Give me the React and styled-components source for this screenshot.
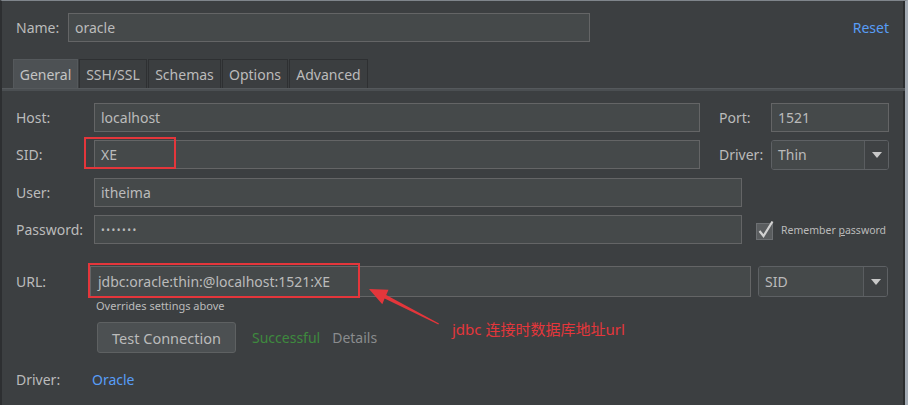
import React from "react";
import styled, { createGlobalStyle } from "styled-components";

const Global = createGlobalStyle`
  html, body { margin: 0; padding: 0; background: #3c3f41; overflow: hidden; }
  * { box-sizing: border-box; }
`;

const Frame = styled.div`
  position: relative;
  width: 908px;
  height: 405px;
  background: #3c3f41;
  border-top: 1px solid #7f858b;
  border-left: 2px solid #2d2f31;
  border-right: 3px solid #a3abb4;
  box-shadow: inset -2px 0 0 #2a2c2d;
  font-family: "Noto Sans", "Noto Sans CJK SC", sans-serif;
  font-size: 14px;
  color: #bbbbbb;
  overflow: hidden;
`;

const Header = styled.div`
  display: flex;
  align-items: center;
  height: 29px;
  margin-top: 12px;
  padding: 0 16px 0 14px;
`;

const Label = styled.span`
  flex: none;
  width: ${(p) => p.$w}px;
  color: #bbbbbb;
  white-space: nowrap;
`;

const Input = styled.div`
  flex: none;
  width: ${(p) => p.$w}px;
  height: ${(p) => p.$h || 29}px;
  background: #45494a;
  border: 1px solid #646566;
  display: flex;
  align-items: center;
  padding-left: ${(p) => p.$pl || 6}px;
  color: #bbbbbb;
  letter-spacing: ${(p) => (p.$dots ? "1.5px" : "0")};
  font-size: ${(p) => (p.$dots ? "10px" : "14px")};
`;

const Link = styled.span`
  color: #589df6;
  margin-left: ${(p) => (p.$auto ? "auto" : "0")};
`;

const Tabs = styled.div`
  display: flex;
  margin-top: 17px;
  padding-left: 11px;
  height: 29px;
`;

const Tab = styled.div`
  display: flex;
  align-items: center;
  justify-content: center;
  width: ${(p) => p.$w}px;
  height: 29px;
  background: ${(p) => (p.$active ? "#4d5154" : "#3b3e40")};
  border: 1px solid ${(p) => (p.$active ? "#55595c" : "#2e3032")};
  border-bottom: none;
  margin-right: 1px;
  color: ${(p) => (p.$active ? "#c4c4c4" : "#bbbbbb")};
  font-size: 14px;
`;

const TabStrip = styled.div`
  height: 3px;
  background: #4b4f52;
  border-top: 1px solid #55595c;
`;

const Form = styled.div`
  padding: 12px 0 0 14px;
  display: flex;
  flex-direction: column;
`;

const Row = styled.div`
  display: flex;
  align-items: center;
  height: ${(p) => p.$h || 29}px;
  margin-top: ${(p) => p.$mt || 0}px;
`;

const SideLabel = styled.span`
  flex: none;
  margin-left: ${(p) => p.$ml}px;
  width: ${(p) => p.$w}px;
  color: #bbbbbb;
`;

const Combo = styled.div`
  flex: none;
  display: flex;
  margin-left: ${(p) => p.$ml || 0}px;
  width: ${(p) => p.$w}px;
  height: ${(p) => p.$h}px;
  border: 1px solid #5e6164;
  border-radius: 3px;
  overflow: hidden;
`;

const ComboValue = styled.div`
  flex: 1;
  display: flex;
  align-items: center;
  padding-left: 6px;
  background: #45494a;
  border-right: 1px solid #5a5d60;
  color: #bbbbbb;
`;

const ComboArrow = styled.div`
  width: 23px;
  display: flex;
  align-items: center;
  justify-content: center;
  background: #3f4244;
  &::after {
    content: "";
    border-left: 5px solid transparent;
    border-right: 5px solid transparent;
    border-top: 6px solid #c8c8c8;
  }
`;

const CheckWrap = styled.div`
  display: flex;
  align-items: center;
  margin-left: 14px;
  gap: 7px;
  font-size: 10.5px;
  color: #bbbbbb;
`;

const Under = styled.span`
  text-decoration: underline;
`;

const Hint = styled.div`
  margin: 3px 0 0 80px;
  font-size: 11px;
  line-height: 12px;
  color: #bbbbbb;
`;

const ActionRow = styled.div`
  display: flex;
  align-items: center;
  margin: 10px 0 0 81px;
  gap: 16px;
`;

const Button = styled.div`
  width: 139px;
  height: 31px;
  display: flex;
  align-items: center;
  justify-content: center;
  background: #4c5052;
  border: 1px solid #5e6162;
  border-radius: 3px;
  color: #bbbbbb;
  font-size: 14.5px;
`;

const Status = styled.span`
  color: ${(p) => p.$c};
  margin-left: ${(p) => p.$ml || 0}px;
`;

const RedBox = styled.div`
  position: absolute;
  left: ${(p) => p.$x}px;
  top: ${(p) => p.$y}px;
  width: ${(p) => p.$w}px;
  height: ${(p) => p.$h}px;
  border: 2px solid #e4363b;
  pointer-events: none;
`;

const Note = styled.div`
  position: absolute;
  left: 450px;
  top: 317px;
  font-family: "Noto Sans", "Noto Sans CJK SC", sans-serif;
  font-size: 15px;
  color: #e4363b;
  white-space: nowrap;
`;

const ArrowSvg = styled.svg`
  position: absolute;
  left: 0;
  top: 0;
  pointer-events: none;
`;

const CheckIcon = () => (
  <svg width="18" height="20" viewBox="0 0 18 20">
    <rect x="0.5" y="3.5" width="16" height="16" fill="#5a5d5f" stroke="#6d7073" />
    <path d="M3.5 11 L7.5 16 L16.5 1.5" fill="none" stroke="#d2d2d2" strokeWidth="2.2" strokeLinejoin="miter" />
  </svg>
);

export default function App() {
  return (
    <>
      <Global />
      <Frame>
        <Header>
          <Label $w={52}>Name:</Label>
          <Input $w={522}>oracle</Input>
          <Link $auto>Reset</Link>
        </Header>
        <Tabs>
          <Tab $w={65} $active>General</Tab>
          <Tab $w={68}>SSH/SSL</Tab>
          <Tab $w={73}>Schemas</Tab>
          <Tab $w={66}>Options</Tab>
          <Tab $w={79}>Advanced</Tab>
        </Tabs>
        <TabStrip />
        <Form>
          <Row>
            <Label $w={78}>Host:</Label>
            <Input $w={606}>localhost</Input>
            <SideLabel $ml={19} $w={52}>Port:</SideLabel>
            <Input $w={118}>1521</Input>
          </Row>
          <Row $mt={8}>
            <Label $w={78}>SID:</Label>
            <Input $w={606}>XE</Input>
            <SideLabel $ml={19} $w={52}>Driver:</SideLabel>
            <Combo $w={118} $h={30}>
              <ComboValue>Thin</ComboValue>
              <ComboArrow />
            </Combo>
          </Row>
          <Row $mt={9}>
            <Label $w={78}>User:</Label>
            <Input $w={648}>itheima</Input>
          </Row>
          <Row $mt={8}>
            <Label $w={78}>Password:</Label>
            <Input $w={648} $dots>•••••••</Input>
            <CheckWrap>
              <CheckIcon />
              <span>
                Remember <Under>p</Under>assword
              </span>
            </CheckWrap>
          </Row>
          <Row $mt={22} $h={31}>
            <Label $w={74}>URL:</Label>
            <Input $w={661} $h={31} $pl={7}>jdbc:oracle:thin:@localhost:1521:XE</Input>
            <Combo $ml={7} $w={130} $h={31}>
              <ComboValue>SID</ComboValue>
              <ComboArrow />
            </Combo>
          </Row>
          <Hint>Overrides settings above</Hint>
          <ActionRow>
            <Button>Test Connection</Button>
            <span>
              <Status $c="#3e8a3e">Successful</Status>
              <Status $c="#8a8c8e" $ml={12}>Details</Status>
            </span>
          </ActionRow>
          <Row $mt={13} $h={26}>
            <Label $w={76}>Driver:</Label>
            <Link>Oracle</Link>
          </Row>
        </Form>

        <RedBox $x={82} $y={136} $w={92} $h={32} />
        <RedBox $x={86} $y={262} $w={272} $h={35} />
        <ArrowSvg width="903" height="404">
          <polygon
            points="367,288 386.5,288.7 384.2,294.1 437,322.6 436.4,323.6 382.6,297.6 380.3,303.3"
            fill="#e4363b"
          />
        </ArrowSvg>
        <Note>jdbc 连接时数据库地址url</Note>
      </Frame>
    </>
  );
}
